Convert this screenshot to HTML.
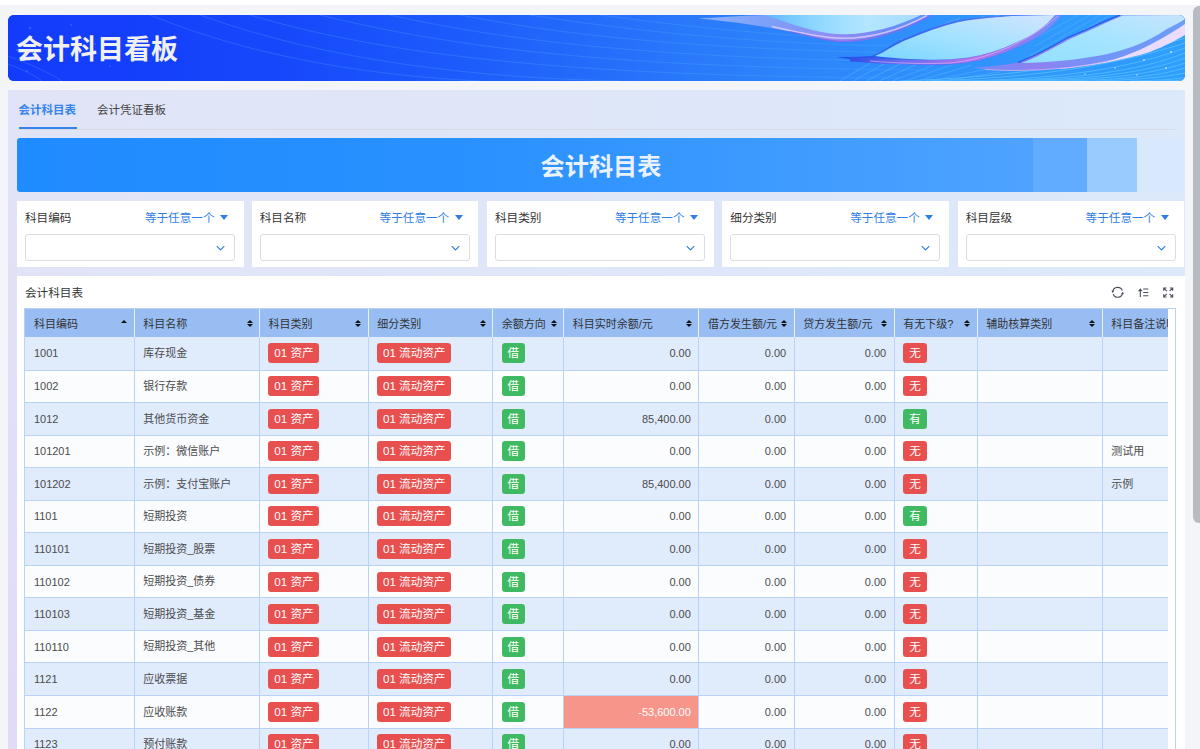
<!DOCTYPE html>
<html lang="zh-CN">
<head>
<meta charset="utf-8">
<title>会计科目看板</title>
<style>
*{box-sizing:border-box;margin:0;padding:0}
html,body{width:1200px;height:749px;overflow:hidden}
body{background:#f4f5f9;font-family:"Liberation Sans","Noto Sans CJK SC",sans-serif;color:#444;position:relative;font-size:11.4px}
.topstrip{position:absolute;left:0;top:0;width:1200px;height:5px;background:#fff}
.hdr{position:absolute;left:8px;top:15px;width:1177px;height:66px;border-radius:6px;overflow:hidden;background:#1640fa}
.hdr svg{position:absolute;left:0;top:0}
.hdr h1{position:absolute;left:8px;top:16px;font-size:27px;line-height:38px;font-weight:bold;color:#f0f0f2;letter-spacing:0}
.panel{position:absolute;left:8px;top:90px;width:1177px;height:700px;background:linear-gradient(90deg,#e1e4f7 0%,#dfe6f8 40%,#dbe9fb 100%)}
.tabs{position:absolute;left:0;top:0;width:1177px;height:40px}
.tab{position:absolute;top:11px;font-size:11.5px;line-height:18px;color:#444;white-space:nowrap}
.tab.act{left:10.5px;color:#3583ec;font-weight:bold}
.tab.t2{left:89px}
.ink{position:absolute;left:10.5px;top:36.7px;width:58px;height:2px;background:#3583ec}
.tline{position:absolute;left:10px;top:38.8px;width:1157px;height:1px;background:#d9dbe3}
.banner{position:absolute;left:9px;top:48px;width:1168px;height:54px;border-radius:3px 0 0 3px;background:linear-gradient(90deg,#1e8bff 0%,#2a91ff 40%,#4fa3ff 87%);overflow:hidden}
.banner b{position:absolute;top:0;height:54px}
.banner .b1{left:1016px;width:53.5px;background:#61acff}
.banner .b2{left:1069.5px;width:50.5px;background:#9acbff}
.banner .b3{left:1120px;width:50px;background:#d8e9fe}
.banner span{position:absolute;left:0;width:1168px;top:10.7px;text-align:center;font-size:24.2px;line-height:36px;font-weight:bold;color:#eaf2ff}
.fcard{position:absolute;top:110.8px;width:226.5px;height:66.4px;background:#fff}
.fl{position:absolute;left:8px;top:8px;line-height:18px;font-size:11.6px;color:#333}
.fo{position:absolute;right:15.5px;top:8px;line-height:18px;font-size:11.6px;color:#2f7de6;white-space:nowrap}
.caret{display:inline-block;width:0;height:0;border-left:4.5px solid transparent;border-right:4.5px solid transparent;border-top:5.5px solid #2f7de6;margin-left:5.5px;vertical-align:2px}
.sel{position:absolute;left:8px;top:33.2px;width:210px;height:27px;border:1px solid #dddddd;border-radius:3px;background:#fff}
.sel svg{position:absolute;right:9px;top:10px}
.tcard{position:absolute;left:9px;top:186px;width:1168px;height:600px;background:#fff}
.ttitle{position:absolute;left:8px;top:8px;font-size:11.6px;line-height:18px;color:#333}
.ticons svg{position:absolute}
.ic1{left:1095px;top:10.5px}
.ic2{left:1121px;top:11px}
.ic3{left:1145px;top:11px}
.twrap{position:absolute;left:7.4px;top:32.3px;width:1151.3px;height:560px;border:1px solid #b9d2f7;overflow:hidden;background:#fff}
.tin{width:1142.3px;height:560px;overflow:hidden}
table{border-collapse:separate;border-spacing:0;table-layout:fixed;width:1167.4px;font-size:11px}
th{height:27.7px;background:#97bdf3;border-right:1px solid #e6effd;text-align:left;font-weight:normal;color:#333;padding:0 8px 0 8.6px;position:relative;white-space:nowrap;overflow:hidden}
th span{position:relative;top:0}
td{height:32.56px;border-right:1px solid #b9d2f7;border-top:1px solid #b9d2f7;padding:0 8px 0 8.5px;white-space:nowrap;overflow:hidden;color:#4c4c4c}
tbody tr:nth-child(odd) td{background:#e0ebfc}
tbody tr:nth-child(even) td{background:#fbfcfe}
tbody tr:first-child td{border-top:none}
td.n{text-align:right;padding-right:7.6px}
tbody tr td.neg{background:#f7958a;color:#fff}
.tg{display:inline-block;height:20px;line-height:20px;padding:0 5.9px;border-radius:3.3px;color:#fff;font-size:11.6px;vertical-align:middle}
.tg.r{background:#e84f4f}
.tg.g{background:#3fba62}
.up,.ud{position:absolute;right:5.7px;top:50%;width:6.6px;height:8px;margin-top:-3.4px}
.up:before{content:"";position:absolute;left:0;top:0.4px;border-left:3.3px solid transparent;border-right:3.3px solid transparent;border-bottom:3.6px solid #111}
.ud:before{content:"";position:absolute;left:0;top:0;border-left:3.3px solid transparent;border-right:3.3px solid transparent;border-bottom:3.8px solid #111}
.ud:after{content:"";position:absolute;left:0;top:4.5px;border-left:3.3px solid transparent;border-right:3.3px solid transparent;border-top:3.8px solid #111}
.sbar{position:absolute;left:1193px;top:6px;width:12px;height:517px;border-radius:6px;background:#b9bbc3}

.lstrip{position:absolute;left:0;top:0;width:9px;height:700px;background:linear-gradient(180deg,#e1e4f8 0%,#e1e1f6 30%,#e1dbf4 100%)}
td.c{padding-bottom:2.4px}
.icall{left:1088px;top:7px}

</style>
</head>
<body>
<div class="topstrip"></div>
<div class="hdr"><svg width="1177" height="66" viewBox="8 15 1177 66">
<defs>
<linearGradient id="hb" x1="0" x2="1" y1="0" y2="0">
<stop offset="0" stop-color="#143cfb"/><stop offset="0.12" stop-color="#1540fb"/><stop offset="0.25" stop-color="#184bfb"/><stop offset="0.375" stop-color="#1d5afb"/><stop offset="0.5" stop-color="#256dfb"/><stop offset="0.59" stop-color="#2b7bfa"/><stop offset="0.7" stop-color="#2f88fb"/><stop offset="0.8" stop-color="#3193fd"/><stop offset="0.9" stop-color="#309afe"/><stop offset="1" stop-color="#2f9fff"/>
</linearGradient>
<linearGradient id="lf1" x1="0" x2="1" y1="0" y2="0">
<stop offset="0" stop-color="#62b8ff"/><stop offset="0.3" stop-color="#8ad6ff"/><stop offset="0.65" stop-color="#b4e6ff"/><stop offset="1" stop-color="#a6dcff"/>
</linearGradient>
<linearGradient id="lf2" x1="0" x2="1" y1="1" y2="0">
<stop offset="0" stop-color="#7ad4ff"/><stop offset="0.45" stop-color="#a2e2ff"/><stop offset="1" stop-color="#d2e4ff"/>
</linearGradient>
<linearGradient id="lf3" x1="0" x2="1" y1="1" y2="0">
<stop offset="0" stop-color="#8fe0ff"/><stop offset="0.5" stop-color="#a6e4ff"/><stop offset="1" stop-color="#c6e4ff"/>
</linearGradient>
<linearGradient id="bd" x1="0" x2="1" y1="0" y2="0">
<stop offset="0" stop-color="#6f9cf8"/><stop offset="0.35" stop-color="#5b7ff3"/><stop offset="0.6" stop-color="#9a6ff0"/><stop offset="0.8" stop-color="#6f86f6"/><stop offset="1" stop-color="#5f9cfa"/>
</linearGradient>
<linearGradient id="bd2" x1="0" x2="1" y1="0" y2="0">
<stop offset="0" stop-color="#1f4fe8"/><stop offset="0.3" stop-color="#5b7ff3"/><stop offset="0.6" stop-color="#a070ee"/><stop offset="1" stop-color="#6f8ef8"/>
</linearGradient>
<linearGradient id="bd3" x1="0" x2="1" y1="0" y2="0"><stop offset="0" stop-color="#6f8cf6"/><stop offset="0.3" stop-color="#8e80f2"/><stop offset="0.55" stop-color="#7692f7"/><stop offset="1" stop-color="#6c9cf8"/></linearGradient>
<linearGradient id="rim2" x1="0" x2="1" y1="0" y2="0"><stop offset="0" stop-color="#1a44e4"/><stop offset="0.25" stop-color="#3565ee"/><stop offset="1" stop-color="#5a8cf8"/></linearGradient>
<linearGradient id="st2" gradientUnits="userSpaceOnUse" x1="836" y1="0" x2="1062" y2="0"><stop offset="0" stop-color="#2248e6"/><stop offset="0.3" stop-color="#6a6ef0"/><stop offset="0.6" stop-color="#b072ea"/><stop offset="0.85" stop-color="#8a80f4"/><stop offset="1" stop-color="#6f90f8"/></linearGradient>
<linearGradient id="bd1" x1="0" x2="1" y1="0" y2="0"><stop offset="0" stop-color="#8fb4fb"/><stop offset="0.3" stop-color="#7c9ff8"/><stop offset="0.6" stop-color="#8f8cf4"/><stop offset="0.8" stop-color="#6f8cf6"/><stop offset="1" stop-color="#5b94fa"/></linearGradient>
</defs>
<rect x="8" y="15" width="1177" height="66" fill="url(#hb)"/>
<g fill="none" stroke="#62c4ff" stroke-width="0.8" opacity="0.5">
<path d="M840,81 L882,56 M853,81 L897,57 M866,81 L912,58 M879,81 L927,60 M892,81 L942,62 M905,81 L957,63 M918,81 L972,65 M931,81 L987,69 M944,81 L1000,72"/>
<path d="M900,40 L960,18 M912,42 L985,16 M930,30 L1000,15"/>
<path d="M1030,56 L1100,15 M1040,56 L1110,15 M1035,46 L1090,15 M1040,36 L1078,15"/>
</g>
<g fill="none" stroke="#56beff" stroke-width="1" opacity="0.85">
<path d="M950,81 C1060,80 1130,68 1185,48"/>
<path d="M975,81 C1075,80 1140,71 1185,53"/>
<path d="M1000,81 C1090,80 1145,73 1185,58"/>
<path d="M1030,81 C1100,80 1150,75 1185,63"/>
<path d="M1060,81 C1115,80 1155,77 1185,68"/>
<path d="M1095,81 C1130,80 1160,78 1185,73"/>
<path d="M1130,81 C1150,80.5 1170,80 1185,77.5"/>
<path d="M925,81 C1040,78 1120,64 1185,43"/>
<path d="M900,81 C1020,77 1110,61 1185,38"/>
<path d="M1160,81 C1170,80.8 1178,80.5 1185,80"/>
</g>
<g fill="none" stroke="#59b4ff" stroke-width="0.8" opacity="0.32">
<path d="M8,56 C30,64 48,72 62,81"/><path d="M8,64 C22,69 34,75 42,81"/>
<path d="M250,15 C400,60 600,76 900,78"/><path d="M320,15 C470,52 640,68 930,70"/><path d="M390,15 C520,44 680,60 960,62"/><path d="M460,15 C580,38 720,52 990,54"/><path d="M530,15 C640,32 760,44 900,46"/><path d="M200,15 C330,62 480,78 620,81"/><path d="M150,15 C260,60 380,76 480,81"/><path d="M600,15 C680,26 760,34 840,38"/>
</g>
<!-- leaf 1 -->
<path d="M698,18.5 C725,20.5 770,27 800,33.5 C815,37 828,41 842,41.8 C875,42 905,30 932,15 L765,15 C740,16 715,17.5 698,18.5 Z" fill="url(#bd1)"/>
<path d="M765,15 C775,18.5 790,24 805,28 C820,32 830,34 842,34.3 C870,34.5 898,26 921,15 Z" fill="url(#lf1)"/>
<path d="M772,26.5 C800,33 825,38 842,38.3 C872,38.5 902,29 927,15.5" fill="none" stroke="#ecd6fb" stroke-width="1.6" opacity="0.7"/>
<path d="M790,31.5 C812,37 828,41 842,41.3 C875,41.5 905,29.5 931.5,15" fill="none" stroke="#8b5fe8" stroke-width="1.2" opacity="0.8"/>
<!-- leaf 2 -->
<path d="M836,57.5 C855,56.8 866,56.5 872,56 C880,53 885,49 890,46 C900,40 906,37.5 913,35 C930,28 940,25 953,21.5 C968,18 978,17 1010,15 L1062,15 C1052,28 1040,38 1020,46 C1003,54 985,60 970,62 C955,65 940,65.5 925,65 C900,64 870,61 836,57.5 Z" fill="url(#rim2)"/>
<path d="M850,59.2 C872,61.2 900,62.6 925,62.5 C940,62.6 955,62 969,59.8 C985,57.3 1003,51 1018,44 C1038,35 1050,26 1058.5,15" fill="none" stroke="url(#st2)" stroke-width="4.6"/>
<path d="M875,56 C884,52 888,49 893,46.5 C902,41.5 908,39 915,36.5 C932,29.5 942,26.5 955,23 C970,19.5 980,18.5 1012,16 L1055,15 C1046,26 1034,35 1016,42.5 C1000,50 984,55 968,57.5 C952,59.5 938,60 924,59.5 C905,59 890,58 875,56 Z" fill="url(#lf2)"/>
<path d="M870,61 C900,63.5 925,64 950,63 C985,60 1025,44 1058,16" fill="none" stroke="#e8b8f6" stroke-width="1" opacity="0.6"/>
<!-- lavender under leaf 3 -->
<path d="M1060,69 C1090,66 1125,60 1150,52 C1165,46 1175,41 1185,35 L1185,22 C1170,32 1150,44 1125,52 C1100,59 1080,63 1060,65 Z" fill="#e9dcff"/>
<!-- leaf 3 -->
<path d="M972,67.5 C990,70.5 1010,71 1035,70 C1060,69 1085,66 1107,61.5 C1130,55 1150,47 1185,24 L1185,15 L1120,15 C1110,19 1100,23 1093,26.7 C1082,32 1074,35 1067,38 C1050,48 1035,56 1018,62.5 C1005,65 990,66.5 972,67.5 Z" fill="url(#bd3)"/>
<path d="M1022,63 C1037,57 1052,49 1069,39.5 C1076,36 1084,33 1095,28 C1102,24.5 1112,20 1123,15.5 L1185,15 L1185,19 C1178,24 1172,26 1167,29 C1155,37 1145,42 1133,46.5 C1120,51 1110,53.5 1100,55.5 C1075,60 1050,62.5 1022,63 Z" fill="url(#lf3)"/>
<path d="M1018,62.5 C1035,56 1050,48 1067,38 C1074,35 1082,32 1093,26.7 C1100,23 1110,19 1120,15" fill="none" stroke="#2450e4" stroke-width="1.4" opacity="0.85"/>
<path d="M985,69.5 C1010,71 1040,70.5 1065,68 C1085,66 1100,63 1112,60" fill="none" stroke="#e4b4f4" stroke-width="1.1" opacity="0.7"/>
<g fill="#d4e8ff" opacity="0.9"><circle cx="1171" cy="52" r="1"/><circle cx="1144" cy="60" r="0.9"/><circle cx="1166" cy="68" r="0.9"/><circle cx="1115" cy="68" r="0.8"/><circle cx="1137" cy="75" r="0.8"/><circle cx="1085" cy="74" r="0.7"/></g>
<g fill="#3a8cff" opacity="0.8"><circle cx="30" cy="28" r="0.9"/><circle cx="71" cy="25" r="0.8"/><circle cx="54" cy="46" r="0.8"/><circle cx="95" cy="44" r="0.8"/><circle cx="17" cy="50" r="0.9"/><circle cx="27" cy="71" r="0.8"/><circle cx="110" cy="66" r="0.7"/></g>
</svg>
<h1>会计科目看板</h1></div>
<div class="panel">
<div class="lstrip"></div>
<div class="tabs"><span class="tab act">会计科目表</span><span class="tab t2">会计凭证看板</span><i class="ink"></i><i class="tline"></i></div>
<div class="banner"><b class="b1"></b><b class="b2"></b><b class="b3"></b><span>会计科目表</span></div>
<div class="fcard" style="left:9px"><span class="fl">科目编码</span><span class="fo">等于任意一个<i class="caret"></i></span><div class="sel"><svg viewBox="0 0 12 8" width="9" height="6"><path d="M1 1.5 L6 6.5 L11 1.5" fill="none" stroke="#2f7de6" stroke-width="1.5"/></svg></div></div>
<div class="fcard" style="left:243.7px"><span class="fl">科目名称</span><span class="fo">等于任意一个<i class="caret"></i></span><div class="sel"><svg viewBox="0 0 12 8" width="9" height="6"><path d="M1 1.5 L6 6.5 L11 1.5" fill="none" stroke="#2f7de6" stroke-width="1.5"/></svg></div></div>
<div class="fcard" style="left:479px"><span class="fl">科目类别</span><span class="fo">等于任意一个<i class="caret"></i></span><div class="sel"><svg viewBox="0 0 12 8" width="9" height="6"><path d="M1 1.5 L6 6.5 L11 1.5" fill="none" stroke="#2f7de6" stroke-width="1.5"/></svg></div></div>
<div class="fcard" style="left:714.3px"><span class="fl">细分类别</span><span class="fo">等于任意一个<i class="caret"></i></span><div class="sel"><svg viewBox="0 0 12 8" width="9" height="6"><path d="M1 1.5 L6 6.5 L11 1.5" fill="none" stroke="#2f7de6" stroke-width="1.5"/></svg></div></div>
<div class="fcard" style="left:949.7px"><span class="fl">科目层级</span><span class="fo">等于任意一个<i class="caret"></i></span><div class="sel"><svg viewBox="0 0 12 8" width="9" height="6"><path d="M1 1.5 L6 6.5 L11 1.5" fill="none" stroke="#2f7de6" stroke-width="1.5"/></svg></div></div>
<div class="tcard">
<div class="ttitle">会计科目表</div>
<div class="ticons"><svg class="icall" viewBox="1105 283 75 18" width="75" height="18"><g fill="none" stroke="#4a4f5e" stroke-width="1.1"><path d="M1112.85 291.5A4.9 4.9 0 0 1 1122.3 290.6"/><path d="M1122.55 293.1A4.9 4.9 0 0 1 1113.1 294"/><path d="M1140.3 297V289.4M1143.2 289H1148.3M1143.2 292.5H1148.3M1143.2 295.8H1148.3"/><path d="M1163.7 290.8V288H1166.5M1169.9 288H1172.7V290.8M1172.7 294.2V297H1169.9M1166.5 297H1163.7V294.2M1164 288.3L1166.8 291.1M1172.4 288.3L1169.6 291.1M1172.4 296.7L1169.6 293.9M1164 296.7L1166.8 293.9"/></g><g fill="#4a4f5e"><path d="M1111.5 290.3L1114.3 290.9L1112.4 292.9Z"/><path d="M1123.9 294.3L1121.1 293.7L1123 291.7Z"/><path d="M1138 291.2L1140.3 288.2L1142.6 291.2Z"/></g></svg></div>
<div class="twrap"><div class="tin"><table>
<colgroup><col style="width:109.3px"><col style="width:125.2px"><col style="width:108.7px"><col style="width:124.6px"><col style="width:71px"><col style="width:135.3px"><col style="width:95.3px"><col style="width:100px"><col style="width:83px"><col style="width:125px"><col style="width:90px"></colgroup>
<thead><tr><th><span>科目编码</span><i class="up"></i></th><th><span>科目名称</span><i class="ud"></i></th><th><span>科目类别</span><i class="ud"></i></th><th><span>细分类别</span><i class="ud"></i></th><th><span>余额方向</span><i class="ud"></i></th><th><span>科目实时余额/元</span><i class="ud"></i></th><th><span>借方发生额/元</span><i class="ud"></i></th><th><span>贷方发生额/元</span><i class="ud"></i></th><th><span>有无下级?</span><i class="ud"></i></th><th><span>辅助核算类别</span><i class="ud"></i></th><th><span>科目备注说明</span><i class="ud"></i></th></tr></thead>
<tbody>
<tr><td>1001</td><td class="c">库存现金</td><td><span class="tg r">01 资产</span></td><td><span class="tg r">01 流动资产</span></td><td><span class="tg g">借</span></td><td class="n">0.00</td><td class="n">0.00</td><td class="n">0.00</td><td><span class="tg r">无</span></td><td></td><td class="c"></td></tr>
<tr><td>1002</td><td class="c">银行存款</td><td><span class="tg r">01 资产</span></td><td><span class="tg r">01 流动资产</span></td><td><span class="tg g">借</span></td><td class="n">0.00</td><td class="n">0.00</td><td class="n">0.00</td><td><span class="tg r">无</span></td><td></td><td class="c"></td></tr>
<tr><td>1012</td><td class="c">其他货币资金</td><td><span class="tg r">01 资产</span></td><td><span class="tg r">01 流动资产</span></td><td><span class="tg g">借</span></td><td class="n">85,400.00</td><td class="n">0.00</td><td class="n">0.00</td><td><span class="tg g">有</span></td><td></td><td class="c"></td></tr>
<tr><td>101201</td><td class="c">示例：微信账户</td><td><span class="tg r">01 资产</span></td><td><span class="tg r">01 流动资产</span></td><td><span class="tg g">借</span></td><td class="n">0.00</td><td class="n">0.00</td><td class="n">0.00</td><td><span class="tg r">无</span></td><td></td><td class="c">测试用</td></tr>
<tr><td>101202</td><td class="c">示例：支付宝账户</td><td><span class="tg r">01 资产</span></td><td><span class="tg r">01 流动资产</span></td><td><span class="tg g">借</span></td><td class="n">85,400.00</td><td class="n">0.00</td><td class="n">0.00</td><td><span class="tg r">无</span></td><td></td><td class="c">示例</td></tr>
<tr><td>1101</td><td class="c">短期投资</td><td><span class="tg r">01 资产</span></td><td><span class="tg r">01 流动资产</span></td><td><span class="tg g">借</span></td><td class="n">0.00</td><td class="n">0.00</td><td class="n">0.00</td><td><span class="tg g">有</span></td><td></td><td class="c"></td></tr>
<tr><td>110101</td><td class="c">短期投资_股票</td><td><span class="tg r">01 资产</span></td><td><span class="tg r">01 流动资产</span></td><td><span class="tg g">借</span></td><td class="n">0.00</td><td class="n">0.00</td><td class="n">0.00</td><td><span class="tg r">无</span></td><td></td><td class="c"></td></tr>
<tr><td>110102</td><td class="c">短期投资_债券</td><td><span class="tg r">01 资产</span></td><td><span class="tg r">01 流动资产</span></td><td><span class="tg g">借</span></td><td class="n">0.00</td><td class="n">0.00</td><td class="n">0.00</td><td><span class="tg r">无</span></td><td></td><td class="c"></td></tr>
<tr><td>110103</td><td class="c">短期投资_基金</td><td><span class="tg r">01 资产</span></td><td><span class="tg r">01 流动资产</span></td><td><span class="tg g">借</span></td><td class="n">0.00</td><td class="n">0.00</td><td class="n">0.00</td><td><span class="tg r">无</span></td><td></td><td class="c"></td></tr>
<tr><td>110110</td><td class="c">短期投资_其他</td><td><span class="tg r">01 资产</span></td><td><span class="tg r">01 流动资产</span></td><td><span class="tg g">借</span></td><td class="n">0.00</td><td class="n">0.00</td><td class="n">0.00</td><td><span class="tg r">无</span></td><td></td><td class="c"></td></tr>
<tr><td>1121</td><td class="c">应收票据</td><td><span class="tg r">01 资产</span></td><td><span class="tg r">01 流动资产</span></td><td><span class="tg g">借</span></td><td class="n">0.00</td><td class="n">0.00</td><td class="n">0.00</td><td><span class="tg r">无</span></td><td></td><td class="c"></td></tr>
<tr><td>1122</td><td class="c">应收账款</td><td><span class="tg r">01 资产</span></td><td><span class="tg r">01 流动资产</span></td><td><span class="tg g">借</span></td><td class="n neg">-53,600.00</td><td class="n">0.00</td><td class="n">0.00</td><td><span class="tg r">无</span></td><td></td><td class="c"></td></tr>
<tr><td>1123</td><td class="c">预付账款</td><td><span class="tg r">01 资产</span></td><td><span class="tg r">01 流动资产</span></td><td><span class="tg g">借</span></td><td class="n">0.00</td><td class="n">0.00</td><td class="n">0.00</td><td><span class="tg r">无</span></td><td></td><td class="c"></td></tr>
<tr><td>1131</td><td class="c">应收股利</td><td><span class="tg r">01 资产</span></td><td><span class="tg r">01 流动资产</span></td><td><span class="tg g">借</span></td><td class="n">0.00</td><td class="n">0.00</td><td class="n">0.00</td><td><span class="tg r">无</span></td><td></td><td class="c"></td></tr>
</tbody></table></div></div>
</div>
</div>
<div class="sbar"></div>
</body>
</html>
